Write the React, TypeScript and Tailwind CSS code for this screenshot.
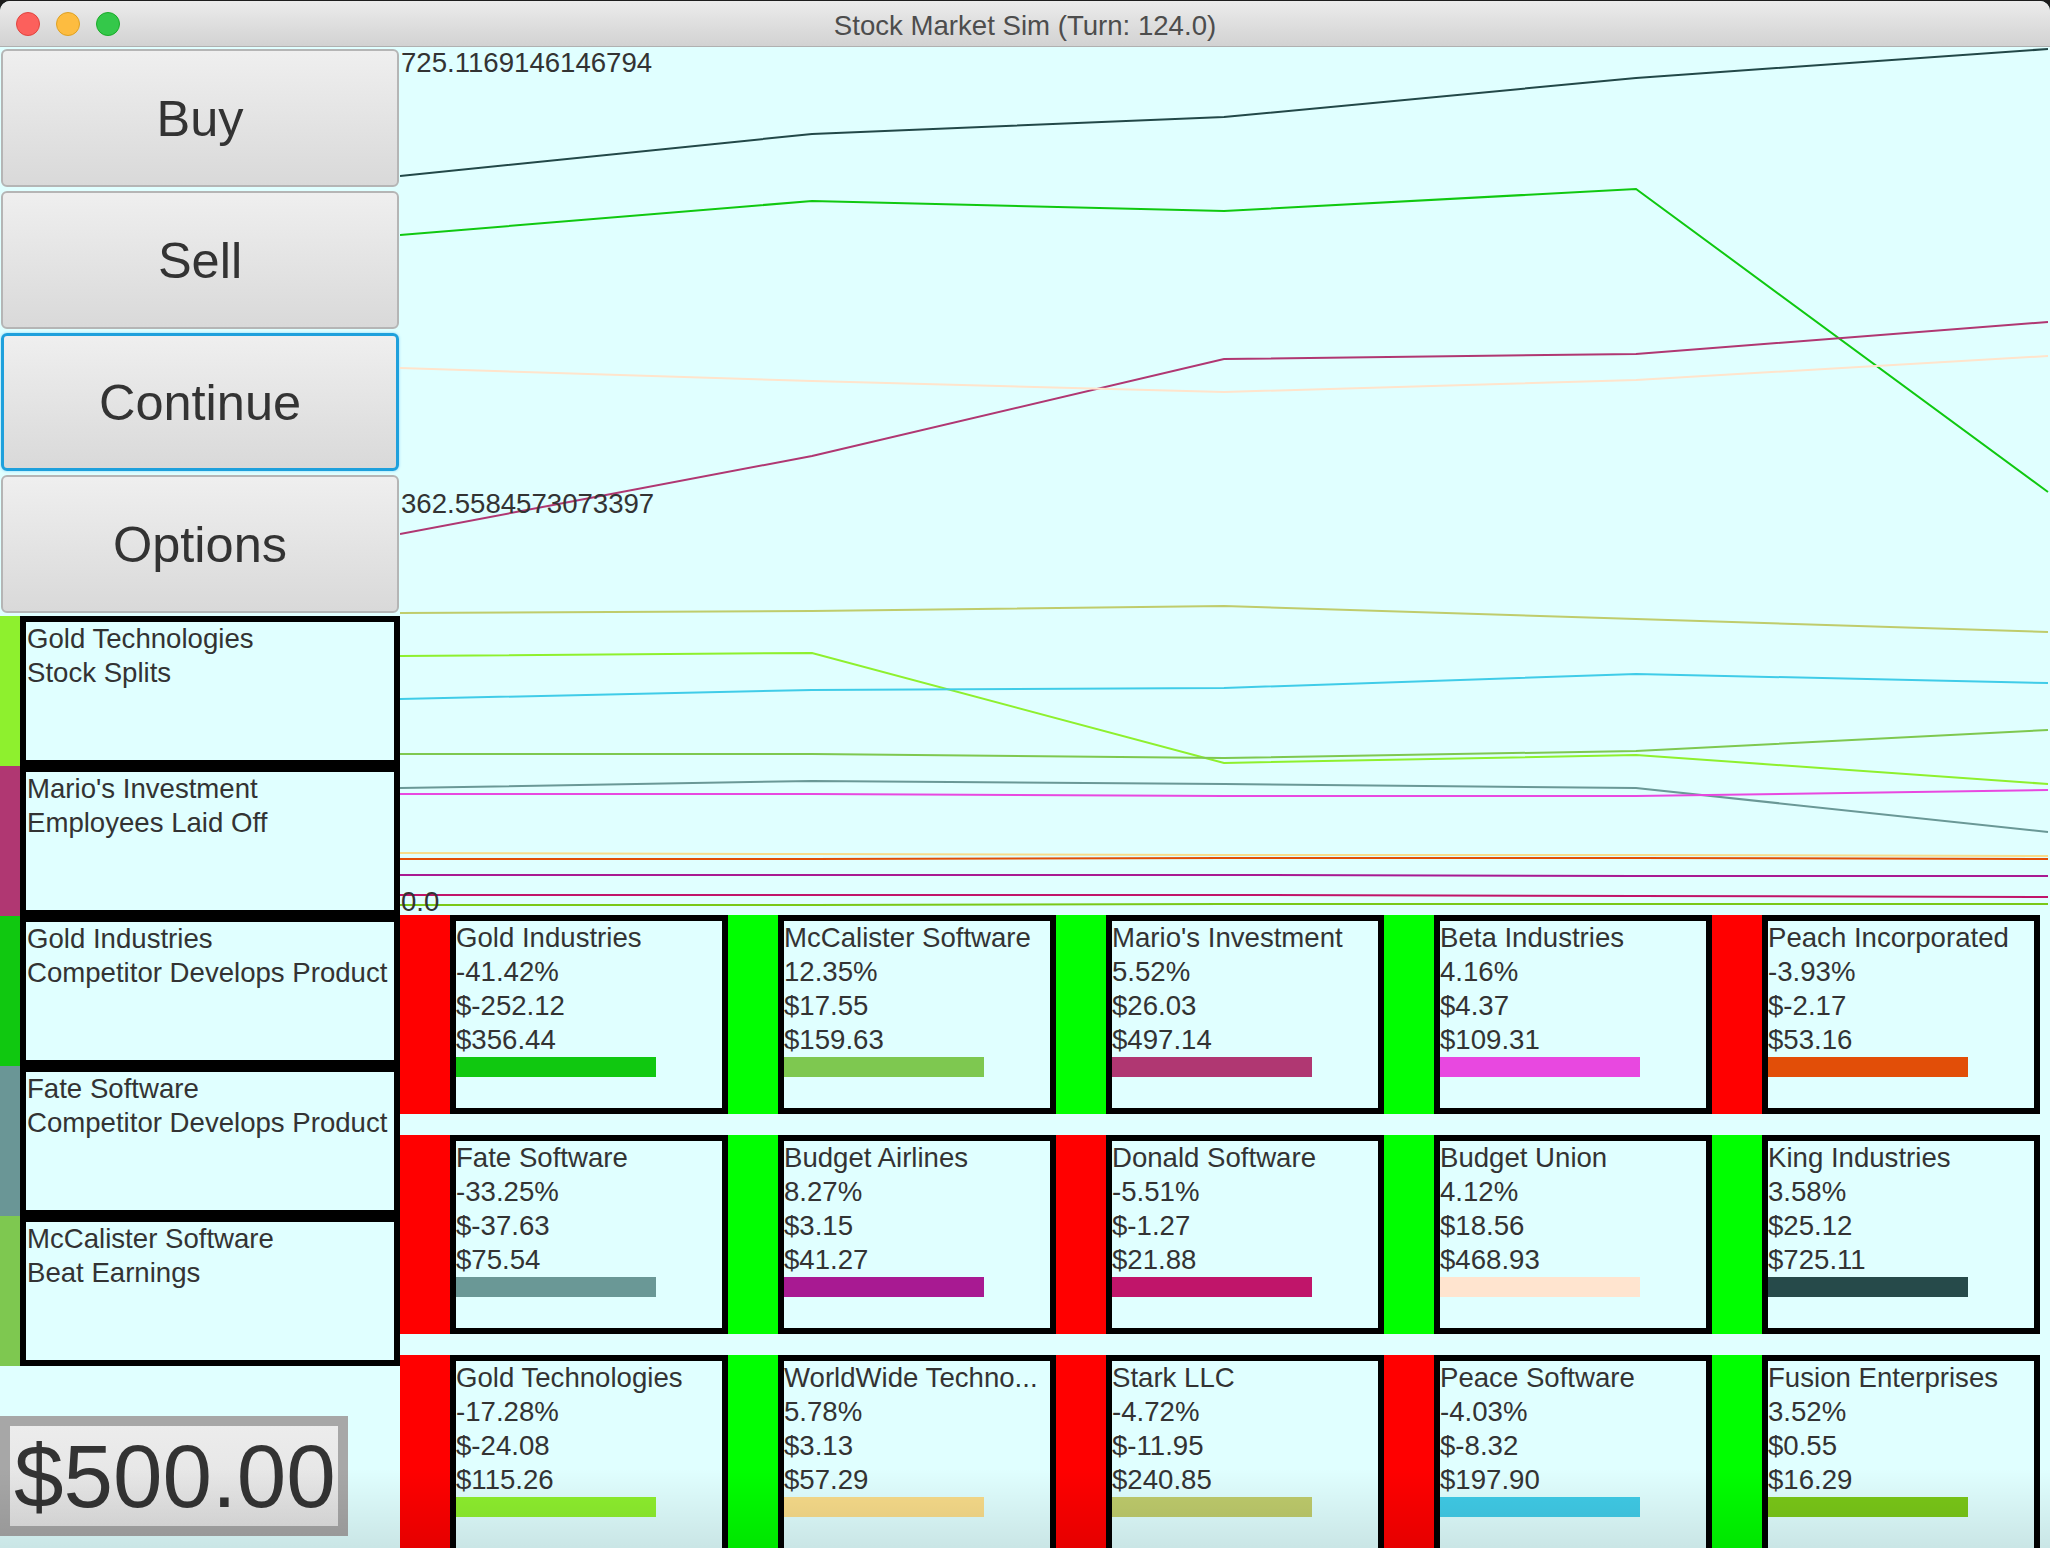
import React from 'react';

type Stock = {
  name: string;
  pct: string;
  change: string;
  price: string;
  color: string;
  up: boolean;
};

const stocks: Stock[] = [
  { name: 'Gold Industries', pct: '-41.42%', change: '$-252.12', price: '$356.44', color: '#10c810', up: false },
  { name: 'McCalister Software', pct: '12.35%', change: '$17.55', price: '$159.63', color: '#7ec850', up: true },
  { name: "Mario's Investment", pct: '5.52%', change: '$26.03', price: '$497.14', color: '#b03772', up: true },
  { name: 'Beta Industries', pct: '4.16%', change: '$4.37', price: '$109.31', color: '#e848e0', up: true },
  { name: 'Peach Incorporated', pct: '-3.93%', change: '$-2.17', price: '$53.16', color: '#e24e08', up: false },
  { name: 'Fate Software', pct: '-33.25%', change: '$-37.63', price: '$75.54', color: '#6a9896', up: false },
  { name: 'Budget Airlines', pct: '8.27%', change: '$3.15', price: '$41.27', color: '#a81a92', up: true },
  { name: 'Donald Software', pct: '-5.51%', change: '$-1.27', price: '$21.88', color: '#c0156a', up: false },
  { name: 'Budget Union', pct: '4.12%', change: '$18.56', price: '$468.93', color: '#ffe4cf', up: true },
  { name: 'King Industries', pct: '3.58%', change: '$25.12', price: '$725.11', color: '#264a4a', up: true },
  { name: 'Gold Technologies', pct: '-17.28%', change: '$-24.08', price: '$115.26', color: '#8ef02e', up: false },
  { name: 'WorldWide Techno...', pct: '5.78%', change: '$3.13', price: '$57.29', color: '#f8dc8a', up: true },
  { name: 'Stark LLC', pct: '-4.72%', change: '$-11.95', price: '$240.85', color: '#bfcc6c', up: false },
  { name: 'Peace Software', pct: '-4.03%', change: '$-8.32', price: '$197.90', color: '#40cce8', up: false },
  { name: 'Fusion Enterprises', pct: '3.52%', change: '$0.55', price: '$16.29', color: '#7ac818', up: true },
];

const events = [
  { company: 'Gold Technologies', text: 'Stock Splits', color: '#8ef02e' },
  { company: "Mario's Investment", text: 'Employees Laid Off', color: '#b03772' },
  { company: 'Gold Industries', text: 'Competitor Develops Product', color: '#10c810' },
  { company: 'Fate Software', text: 'Competitor Develops Product', color: '#6a9696' },
  { company: 'McCalister Software', text: 'Beat Earnings', color: '#7ec850' },
];

// price history, in page pixels (chart top sits at y=47)
const history: { color: string; ys: number[] }[] = [
  { color: '#224848', ys: [174, 132, 115, 76, 47] },
  { color: '#10c810', ys: [233, 199, 209, 187, 490] },
  { color: '#b03772', ys: [532, 454, 357, 352, 320] },
  { color: '#ffe4cc', ys: [366, 379, 390, 378, 354] },
  { color: '#bfcc6c', ys: [611, 609, 604, 617, 630] },
  { color: '#8ef02e', ys: [654, 651, 761, 753, 782] },
  { color: '#40cce8', ys: [697, 688, 686, 672, 681] },
  { color: '#7ec850', ys: [752, 752, 756, 749, 728] },
  { color: '#6a9896', ys: [786, 779, 782, 786, 830] },
  { color: '#e848e0', ys: [792, 792, 794, 794, 788] },
  { color: '#f8dc8a', ys: [851, 852, 853, 853, 854] },
  { color: '#e24e08', ys: [857, 857, 856, 856, 857] },
  { color: '#a81a92', ys: [873, 873, 873, 874, 874] },
  { color: '#c0156a', ys: [893, 893, 893, 894, 895] },
  { color: '#7ac818', ys: [903, 903, 902, 902, 902] },
];

const CHART_TOP = 45;
const STEP = 412;

function Chart() {
  return (
    <div className="relative h-[868px] w-full">
      <svg width="1650" height="868" className="absolute left-0 top-0">
        {history.map((line, i) => (
          <polyline
            key={i}
            fill="none"
            stroke={line.color}
            strokeWidth="2"
            points={line.ys.map((y, j) => `${j * STEP},${Math.max(1, y - CHART_TOP)}`).join(' ')}
          />
        ))}
      </svg>
      <span className="absolute left-[1px] top-[2px] leading-[28px]">725.1169146146794</span>
      <span className="absolute left-[1px] top-[443px] leading-[28px]">362.5584573073397</span>
      <span className="absolute left-[1px] top-[841px] leading-[28px]">0.0</span>
    </div>
  );
}

function MenuButton({ label, focused }: { label: string; focused?: boolean }) {
  return (
    <button
      className={`h-[138px] w-[398px] rounded-[6px] bg-linear-to-b from-[#efefef] to-[#d9d9d9] text-[50.5px] text-[#333] ${
        focused ? 'border-[3px] border-[#1ea0dc] shadow-[0_0_3px_#8fd3f2]' : 'border-2 border-[#b5b5b5]'
      }`}
    >
      {label}
    </button>
  );
}

function StockCard({ s }: { s: Stock }) {
  return (
    <div className="flex h-[199px] w-[328px]">
      <div className={`w-[50px] ${s.up ? 'bg-[#00ff00]' : 'bg-[#ff0000]'}`} />
      <div className="w-[278px] border-[6px] border-black bg-[#e0ffff] whitespace-nowrap overflow-hidden leading-[34px]">
        <div>{s.name}</div>
        <div>{s.pct}</div>
        <div>{s.change}</div>
        <div>{s.price}</div>
        <div className="h-[20px] w-[200px]" style={{ backgroundColor: s.color }} />
      </div>
    </div>
  );
}

export default function App() {
  return (
    <div className="relative h-[1548px] w-[2050px] overflow-hidden bg-[#1e1e1e] pt-[1px] font-['Liberation_Sans',Arial,sans-serif] text-[27.6px] text-[#333]">
      <div className="flex h-full flex-col overflow-hidden rounded-t-[10px] bg-[#e0ffff]">
        {/* title bar */}
        <div className="relative flex h-[48px] items-center justify-center border-b border-[#b0b0b0] bg-linear-to-b from-[#ececec] to-[#d2d2d2] pt-[4px]">
          <div className="absolute left-[16px] top-[11px] flex gap-[16px]">
            <span className="h-[24px] w-[24px] rounded-full border border-[#e0443e] bg-[#fc605c]" />
            <span className="h-[24px] w-[24px] rounded-full border border-[#dea123] bg-[#fdbc40]" />
            <span className="h-[24px] w-[24px] rounded-full border border-[#1aab29] bg-[#34c84a]" />
          </div>
          <span className="text-[#4d4d4d]">Stock Market Sim (Turn: 124.0)</span>
        </div>

        <div className="flex flex-1">
          {/* left column */}
          <div className="flex w-[400px] flex-col">
            <div className="flex flex-col gap-[4px] pl-[1px] pt-[2px]">
              <MenuButton label="Buy" />
              <MenuButton label="Sell" />
              <MenuButton label="Continue" focused />
              <MenuButton label="Options" />
            </div>

            <div className="mt-[3px] flex flex-col">
              {events.map((e, i) => (
                <div key={i} className="flex h-[150px]">
                  <div className="w-[20px]" style={{ backgroundColor: e.color }} />
                  <div className="flex-1 whitespace-nowrap border-[6px] border-black bg-[#e0ffff] pl-[1px] leading-[34px]">
                    <div>{e.company}</div>
                    <div>{e.text}</div>
                  </div>
                </div>
              ))}
            </div>

            <div className="mt-[50px] flex h-[120px] w-[348px] items-center border-[10px] border-[#a7a7a7] bg-linear-to-b from-[#ececec] to-[#e2e2e2] pl-[4px] text-[89px] leading-none">
              $500.00
            </div>
          </div>

          {/* chart + market */}
          <div className="flex flex-1 flex-col">
            <Chart />
            <div className="grid grid-cols-[repeat(5,328px)] gap-y-[21px]">
              {stocks.map((s, i) => (
                <StockCard key={i} s={s} />
              ))}
            </div>
          </div>
        </div>
      </div>
      <div className="pointer-events-none absolute bottom-0 left-0 h-[80px] w-full bg-linear-to-b from-transparent to-black/10" />
    </div>
  );
}
